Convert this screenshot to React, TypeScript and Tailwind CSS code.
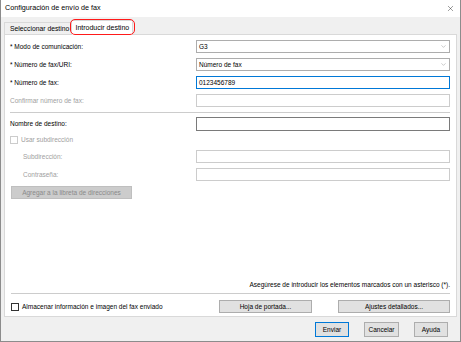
import { ChevronDown, X } from 'lucide-react';

const font = { fontFamily: '"Liberation Sans", Arial, sans-serif' };

function Select({ value }: { value: string }) {
  return (
    <div className="w-[254px] h-[13px] bg-white border border-[#adadad] flex items-center justify-between pl-[2px] pr-[2px] text-[6.5px] text-black">
      <span>{value}</span>
      <ChevronDown size={7} strokeWidth={1.25} className="text-[#707070]" />
    </div>
  );
}

function Field({ value, state }: { value?: string; state: 'focus' | 'normal' | 'disabled' }) {
  const border =
    state === 'focus' ? 'border-[#0078d7]' : state === 'normal' ? 'border-[#7a7a7a]' : 'border-[#cccccc]';
  return (
    <div className={`w-[254px] h-[13px] bg-white border ${border} flex items-center pl-[2px] text-[6.5px] text-black`}>
      {value}
    </div>
  );
}

function Btn({ label, w, h, primary }: { label: string; w: string; h: string; primary?: boolean }) {
  return (
    <div
      className={`${w} ${h} flex items-center justify-center text-[6.5px] text-black bg-[#e1e1e1] border ${
        primary ? 'border-[#0078d7]' : 'border-[#adadad]'
      }`}
    >
      {label}
    </div>
  );
}

function Row({ label, disabled, indent, children }: { label: string; disabled?: boolean; indent?: boolean; children: React.ReactNode }) {
  return (
    <div className="flex items-center justify-between">
      <span className={`text-[6.5px] ${disabled ? 'text-[#a0a0a0]' : 'text-black'} ${indent ? 'pl-[13px]' : ''}`}>{label}</span>
      {children}
    </div>
  );
}

export default function App() {
  return (
    <div style={font} className="w-[461px] h-[342px] flex flex-col bg-[#f0f0f0] border-l border-r border-b border-[#8c8c8c] overflow-hidden">
      {/* Title bar */}
      <div className="h-[17px] bg-white flex items-center justify-between pl-[4px] pr-[5px]">
        <span className="text-[7.2px] text-black">Configuración de envío de fax</span>
        <X size={9} strokeWidth={1} className="text-black" />
      </div>

      {/* Tabs */}
      <div className="flex items-end pl-[3px] h-[17px]">
        <div className="shrink-0 h-[13px] whitespace-nowrap pl-[5px] pr-[2px] flex items-center text-[6.8px] text-black bg-[#f0f0f0] border border-b-0 border-r-0 border-[#d9d9d9] -mb-px">
          Seleccionar destino
        </div>
        <div className="relative shrink-0 -mb-px z-10">
          <div className="h-[15px] w-[62px] whitespace-nowrap flex items-center justify-center text-[7px] text-black bg-white border border-b-0 border-[#d9d9d9]">
            Introducir destino
          </div>
          <div className="absolute -left-px -right-[2px] top-[-1px] h-[16px] rounded-[5px] border-[1.5px] border-[#ff1a1a]" />
        </div>
      </div>

      {/* Panel */}
      <div className="mx-[3px] h-[283px] bg-white border border-[#d9d9d9] flex flex-col pl-[5px] pr-[6px] pt-[5px]">
        <div className="flex flex-col gap-[5px]">
          <Row label="* Modo de comunicación:">
            <Select value="G3" />
          </Row>
          <Row label="* Número de fax/URI:">
            <Select value="Número de fax" />
          </Row>
          <Row label="* Número de fax:">
            <Field value="0123456789" state="focus" />
          </Row>
          <Row label="Confirmar número de fax:" disabled>
            <Field state="disabled" />
          </Row>
        </div>

        <div className="h-px bg-[#cccccc] mt-[5px]" />

        <div className="mt-[4px]">
          <Row label="Nombre de destino:">
            <div className="w-[254px] h-[14px] bg-white border border-[#7a7a7a]" />
          </Row>
        </div>

        <div className="flex items-center gap-[3px] mt-[4px] h-[10px]">
          <div className="w-[8px] h-[8px] border border-[#cccccc] bg-white" />
          <span className="text-[6.5px] text-[#a0a0a0]">Usar subdirección</span>
        </div>

        <div className="flex flex-col gap-[5px] mt-[5px]">
          <Row label="Subdirección:" disabled indent>
            <Field state="disabled" />
          </Row>
          <Row label="Contraseña:" disabled indent>
            <Field state="disabled" />
          </Row>
        </div>

        <div className="mt-[5px] w-[121px] h-[13px] ml-[1px] bg-[#cccccc] border border-[#bfbfbf] flex items-center justify-center text-[6.5px] text-[#8a8a8a]">
          Agregar a la libreta de direcciones
        </div>

        <div className="flex-1" />

        <div className="text-right text-[6.5px] text-black leading-[10px]">
          Asegúrese de introducir los elementos marcados con un asterisco (*).
        </div>
        <div className="h-px bg-[#cccccc] mt-[3px] ml-[1px]" />

        <div className="flex items-center justify-between mt-[6px] mb-[3px] ml-[1px]">
          <div className="flex items-center gap-[3px]">
            <div className="w-[8px] h-[8px] border border-[#333333] bg-white" />
            <span className="text-[6.5px] text-black">Almacenar información e imagen del fax enviado</span>
          </div>
          <div className="flex gap-[26px]">
            <Btn label="Hoja de portada..." w="w-[93px]" h="h-[13px]" />
            <Btn label="Ajustes detallados..." w="w-[112px]" h="h-[13px]" />
          </div>
        </div>
      </div>

      {/* Footer buttons */}
      <div className="flex justify-end gap-[15px] pr-[12px] pt-[5px]">
        <Btn label="Enviar" w="w-[34px]" h="h-[15px]" primary />
        <Btn label="Cancelar" w="w-[35px]" h="h-[15px]" />
        <Btn label="Ayuda" w="w-[34px]" h="h-[15px]" />
      </div>
    </div>
  );
}
